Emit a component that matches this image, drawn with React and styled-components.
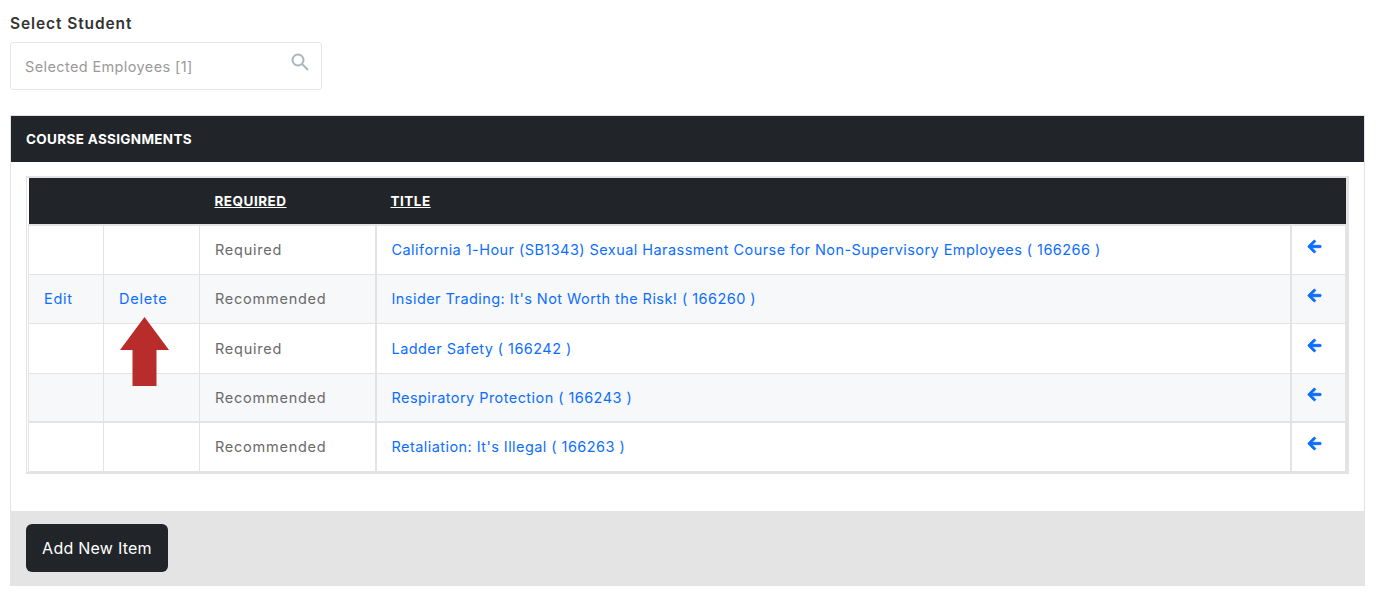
import React from 'react';
import styled, { createGlobalStyle } from 'styled-components';
import { FaArrowLeft } from 'react-icons/fa';

const Global = createGlobalStyle`
  html, body { margin: 0; padding: 0; background: #fff; }
  body { font-family: "Inter", "Liberation Sans", sans-serif; color: #212529; }
`;
const Page = styled.div`
  width: 1375px; height: 596px; box-sizing: border-box; padding: 14px 10px 0; overflow: hidden;
`;
const Label = styled.div`
  font-size: 15.5px; font-weight: 600; line-height: 19px; color: #333; letter-spacing: .9px; margin-bottom: 9px;
`;
const SearchBox = styled.div`
  width: 312px; height: 48px; box-sizing: border-box; border: 1px solid #e6e6e6; border-radius: 3px;
  display: flex; align-items: center; justify-content: space-between; padding: 0 12px 0 14px;
`;
const Placeholder = styled.span`
  font-size: 14.5px; color: #9a9a9a; letter-spacing: .38px; margin-top: 1px;
`;
const SearchIcon = styled.svg`
  width: 18px; height: 18px; margin-bottom: 8px; color: #a9b7bd;
`;
const Panel = styled.section`
  margin-top: 25px; width: 1355px;
`;
const PanelHead = styled.div`
  height: 47px; box-sizing: border-box; background: #212529; border: 1px solid #e3e3e3; border-bottom: 0;
  color: #fff; font-size: 13.5px; font-weight: 700; letter-spacing: .33px; display: flex; align-items: center; padding-left: 15px;
`;
const PanelBody = styled.div`
  border: solid #e3e3e3; border-width: 0 1px; padding: 14px 15px 37px; background: #fff;
`;
const TableWrap = styled.div`
  border: solid #e3e3e3; border-width: 2px 3px 2px 1px; padding-left: 1px;
`;
const Table = styled.table`
  width: 100%; border-collapse: collapse; table-layout: fixed; font-size: 14.5px; letter-spacing: .75px;
`;
const Th = styled.th`
  background: #212529; color: #fff; height: 46px; padding: 0 0 0 15px; text-align: left; font-size: 13.5px; font-weight: 700;
  text-decoration: underline; letter-spacing: .5px;
`;
const Row = styled.tr`
  background: ${p => (p.$odd ? '#f7f8fa' : '#fff')};
`;
const Td = styled.td`
  box-sizing: border-box; border: 1px solid #e3e3e3; height: ${p => (p.$tall ? 50 : 49)}px; padding: 0 0 0 15px; color: #6a6a6a;
  border-right-width: ${p => (p.$thick ? '2px' : '1px')};
  border-top-width: ${p => (p.$thickTop ? '2px' : '1px')};
`;
const TitleLink = styled.a`
  color: #0d6efd; text-decoration: none; letter-spacing: .44px;
`;
const ActionLink = styled.a`
  color: #0d6efd; text-decoration: none; letter-spacing: .75px;
`;
const ArrowCell = styled(Td)`
  padding: 0 0 6px 15px;
`;
const ArrowIcon = styled(FaArrowLeft)`
  display: block; width: 15px; height: 15px; color: #0d6efd; stroke: currentColor; stroke-width: 30;
`;
const Footer = styled.div`
  height: 75px; box-sizing: border-box; background: #e4e4e4; padding: 13px 16px;
`;
const Button = styled.button`
  width: 142px; height: 48px; border: 0; border-radius: 6px; background: #212529; color: #fff;
  font: 400 16px "Inter", "Liberation Sans", sans-serif; letter-spacing: .25px;
`;
const Callout = styled.svg`
  position: absolute; left: 120px; top: 317px; width: 49px; height: 69px;
`;

const rows = [
  ['Required', 'California 1-Hour (SB1343) Sexual Harassment Course for Non-Supervisory Employees ( 166266 )'],
  ['Recommended', "Insider Trading: It's Not Worth the Risk! ( 166260 )", true],
  ['Required', 'Ladder Safety ( 166242 )'],
  ['Recommended', 'Respiratory Protection ( 166243 )'],
  ['Recommended', "Retaliation: It's Illegal ( 166263 )"],
];

export default function App() {
  return (
    <Page>
      <Global />
      <Label>Select Student</Label>
      <SearchBox>
        <Placeholder>Selected Employees [1]</Placeholder>
        <SearchIcon viewBox="0 0 18 18" fill="none" stroke="currentColor" strokeWidth="2">
          <circle cx="7" cy="7" r="5.5" />
          <path d="M11 11l6 6" />
        </SearchIcon>
      </SearchBox>
      <Panel>
        <PanelHead>COURSE ASSIGNMENTS</PanelHead>
        <PanelBody>
          <TableWrap>
            <Table>
              <colgroup>
                <col style={{ width: 75 }} />
                <col style={{ width: 96 }} />
                <col style={{ width: 176 }} />
                <col />
                <col style={{ width: 55 }} />
              </colgroup>
              <thead>
                <tr>
                  <Th />
                  <Th />
                  <Th>REQUIRED</Th>
                  <Th>TITLE</Th>
                  <Th />
                </tr>
              </thead>
              <tbody>
                {rows.map((r, i) => {
                  const top = i === 0 || i === 4;
                  const tall = i === 2;
                  return (
                    <Row key={r[1]} $odd={i % 2 === 1}>
                      <Td $tall={tall} $thickTop={top}>{r[2] && <ActionLink>Edit</ActionLink>}</Td>
                      <Td $tall={tall} $thickTop={top}>{r[2] && <ActionLink>Delete</ActionLink>}</Td>
                      <Td $tall={tall} $thick $thickTop={top}>{r[0]}</Td>
                      <Td $tall={tall} $thick $thickTop={top}><TitleLink>{r[1]}</TitleLink></Td>
                      <ArrowCell $tall={tall} $thickTop={top}><ArrowIcon /></ArrowCell>
                    </Row>
                  );
                })}
              </tbody>
            </Table>
          </TableWrap>
        </PanelBody>
        <Footer><Button>Add New Item</Button></Footer>
      </Panel>
      <Callout viewBox="0 0 49 69"><path fill="#b92c2c" d="M24.5 0 49 33H36.5V69H12.5V33H0Z" /></Callout>
    </Page>
  );
}
